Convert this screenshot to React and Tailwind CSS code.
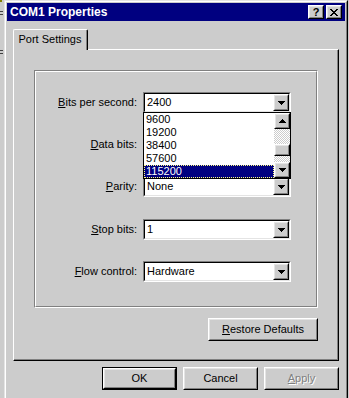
import React from "react";

const Raised = ({ className = "", inner = "", children }) => (
  <div className={"bg-[#cccccc] border border-t-white border-l-white border-r-black border-b-black " + className}>
    <div className={"w-full h-full border border-t-[#e4e4e4] border-l-[#e4e4e4] border-r-[#808080] border-b-[#808080] flex items-center justify-center " + inner}>
      {children}
    </div>
  </div>
);

const DownArrow = () => (
  <svg width="7" height="4" viewBox="0 0 7 4" shapeRendering="crispEdges">
    <path d="M0 0h7v1H0zM1 1h5v1H1zM2 2h3v1H2zM3 3h1v1H3z" fill="#000" />
  </svg>
);

const UpArrow = () => (
  <svg width="7" height="4" viewBox="0 0 7 4" shapeRendering="crispEdges">
    <path d="M3 0h1v1H3zM2 1h3v1H2zM1 2h5v1H1zM0 3h7v1H0z" fill="#000" />
  </svg>
);

const CloseGlyph = () => (
  <svg width="8" height="7" viewBox="0 0 8 7" shapeRendering="crispEdges">
    <path
      d="M0 0h2v1H0zM6 0h2v1H6zM1 1h2v1H1zM5 1h2v1H5zM2 2h4v1H2zM3 3h2v1H3zM2 4h4v1H2zM1 5h2v1H1zM5 5h2v1H5zM0 6h2v1H0zM6 6h2v1H6z"
      fill="#000"
    />
  </svg>
);

const Combo = ({ value, children }) => (
  <div className="relative w-[148px] h-[21px] border border-t-[#808080] border-l-[#808080] border-r-white border-b-white">
    <div className="w-full h-full border border-t-black border-l-black border-r-[#e4e4e4] border-b-[#e4e4e4] bg-white flex">
      <div className="flex-1 pl-[2px] text-[11px] leading-[17px] text-black">{value}</div>
      <Raised className="w-[16px] h-[17px]">
        <DownArrow />
      </Raised>
    </div>
    {children}
  </div>
);

const Row = ({ label, u, value, className = "", children }) => (
  <div className={"flex items-center " + className}>
    <div className="w-[107px] pr-[6px] text-right text-[11px] text-black">
      {label[0]}
      <span className="underline underline-offset-[1px]">{u}</span>
      {label[1]}
    </div>
    <Combo value={value}>{children}</Combo>
  </div>
);

const items = ["9600", "19200", "38400", "57600", "115200"];

export default function App() {
  return (
    <div className="w-[349px] h-[398px] overflow-hidden bg-[#cccccc] flex font-['Liberation_Sans',Arial,sans-serif]">
      <div className="w-[4px] shrink-0 flex flex-col">
        <div className="w-[2px] h-[2px] bg-[#808000]" />
        <div className="h-[9px]" />
        <div className="w-[3px] h-px bg-[#404040]" />
        <div className="h-[2px]" />
        <div className="w-[3px] h-px bg-[#404040]" />
        <div className="h-[35px]" />
        <div className="w-[3px] h-px bg-[#404040]" />
        <div className="h-[2px]" />
        <div className="w-[3px] h-px bg-[#404040]" />
      </div>
      <div className="w-[344px] h-[420px] shrink-0 border-t border-l border-r border-t-[#e4e4e4] border-l-[#e4e4e4] border-r-black">
        <div className="h-full border-t border-l border-r border-t-white border-l-white border-r-[#808080] p-[1px] flex flex-col">
          {/* Title bar */}
          <div className="h-[18px] bg-[#000080] flex items-center justify-between pl-[3px] pr-[3px]">
            <span className="text-white font-bold text-[12px] leading-[18px]">COM1 Properties</span>
            <div className="flex gap-[2px]">
              <Raised className="w-[16px] h-[14px]">
                <span className="text-black font-bold text-[11px] leading-[10px]">?</span>
              </Raised>
              <Raised className="w-[16px] h-[14px]">
                <CloseGlyph />
              </Raised>
            </div>
          </div>

          {/* Tab control */}
          <div className="mt-[8px] mx-[6px] flex flex-col">
            <div className="flex">
              <div className="relative z-10 -mb-px w-[75px] h-[21px] bg-[#cccccc] border-l border-t border-r border-l-white border-t-white border-r-black rounded-tl-[2px] rounded-tr-[2px]">
                <div className="h-full border-r border-r-[#808080] flex items-center justify-center text-[11px] text-black pb-[1px]">
                  Port Settings
                </div>
              </div>
            </div>
            <div className="w-[326px] h-[312px] border border-t-white border-l-white border-r-black border-b-black">
              <div className="w-full h-full border-r border-b border-r-[#808080] border-b-[#808080] pl-[20px] pt-[20px]">
                <div className="w-[284px] flex flex-col items-end">
                  {/* Group box */}
                  <div className="w-[284px] h-[238px] border border-t-[#808080] border-l-[#808080] border-r-white border-b-white">
                    <div className="w-full h-full border border-t-white border-l-white border-r-[#808080] border-b-[#808080] pt-[20px] flex flex-col">
                      <Row label={["", "its per second:"]} u="B" value="2400" className="relative z-20">
                        <div className="absolute left-[-1px] top-[19px] w-[148px] h-[67px] border border-black bg-white flex">
                          <div className="flex-1 flex flex-col">
                            {items.map((it) =>
                              it === "115200" ? (
                                <div
                                  key={it}
                                  className="h-[13px] leading-[12px] pl-[2px] text-[11px] bg-[#000080] text-white outline-1 outline-dotted outline-[#ffff80] -outline-offset-1"
                                >
                                  {it}
                                </div>
                              ) : (
                                <div key={it} className="h-[13px] leading-[12px] pl-[2px] text-[11px] text-black">
                                  {it}
                                </div>
                              )
                            )}
                          </div>
                          <div className="w-[16px] flex flex-col">
                            <Raised className="w-[16px] h-[16px]">
                              <UpArrow />
                            </Raised>
                            <div className="h-[15px] bg-[image:repeating-conic-gradient(#cccccc_0%_25%,#ffffff_0%_50%)] bg-[length:2px_2px]" />
                            <Raised className="w-[16px] h-[12px]" />
                            <div className="h-[6px] bg-[image:repeating-conic-gradient(#cccccc_0%_25%,#ffffff_0%_50%)] bg-[length:2px_2px]" />
                            <Raised className="w-[16px] h-[16px]">
                              <DownArrow />
                            </Raised>
                          </div>
                        </div>
                      </Row>
                      <Row label={["", "ata bits:"]} u="D" value="" className="mt-[21px]" />
                      <Row label={["", "arity:"]} u="P" value="None" className="mt-[21px]" />
                      <Row label={["", "top bits:"]} u="S" value="1" className="mt-[22px]" />
                      <Row label={["", "low control:"]} u="F" value="Hardware" className="mt-[21px]" />
                    </div>
                  </div>
                  <Raised className="mt-[10px] w-[110px] h-[23px]" inner="text-[11px] text-black">
                    <span>
                      <span className="underline underline-offset-[1px]">R</span>estore Defaults
                    </span>
                  </Raised>
                </div>
              </div>
            </div>
          </div>

          {/* Bottom buttons */}
          <div className="mt-[6px] mx-[6px] flex justify-end gap-[6px]">
            <div className="w-[75px] h-[23px] border border-black">
              <Raised className="w-full h-full" inner="text-[11px] text-black">
                OK
              </Raised>
            </div>
            <Raised className="w-[75px] h-[23px]" inner="text-[11px] text-black">
              Cancel
            </Raised>
            <Raised className="w-[75px] h-[23px]" inner="text-[11px] text-[#808080] [text-shadow:1px_1px_0_#ffffff]">
              <span>
                <span className="underline underline-offset-[1px]">A</span>pply
              </span>
            </Raised>
          </div>
        </div>
      </div>
      <div className="w-px shrink-0" />
    </div>
  );
}
